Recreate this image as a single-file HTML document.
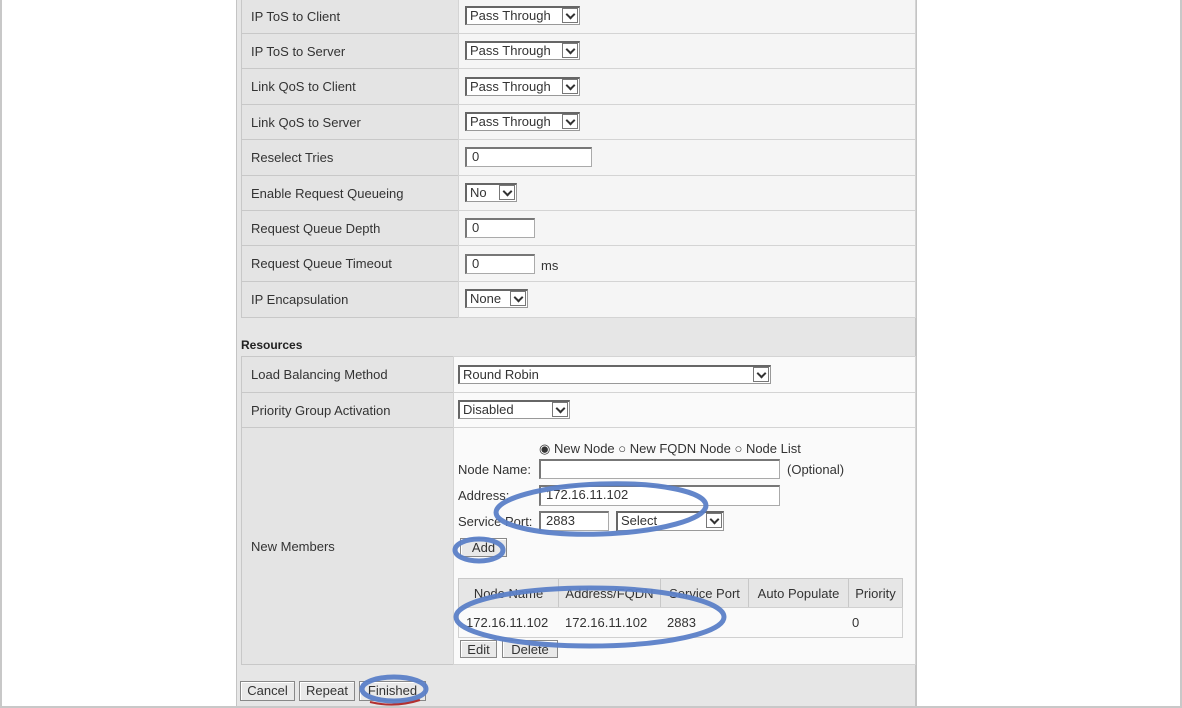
<!DOCTYPE html>
<html><head><meta charset="utf-8"><style>
*{box-sizing:border-box;margin:0;padding:0}
body{width:1182px;height:708px;background:#fff;position:relative;overflow:hidden;font-family:"Liberation Sans",Arial,sans-serif;font-size:13px;color:#333}
.a{position:absolute}
.frame{left:0;top:0;width:1182px;height:708px;border:2px solid #c8c8c8;border-top:none}
.panel{left:236px;top:0;width:681px;height:706px;background:#e6e6e6;border-left:1px solid #c4c4c4;border-right:2px solid #c4c4c4}
.lab{background:#e4e4e4;border:1px solid #c8c8c8;padding-left:9px;display:flex;align-items:center}
.val{background:#f5f5f5;border:1px solid #d4d4d4}
.inp{background:#fff;border:1px solid #aaa;border-top:2px solid #777;border-left:2px solid #777;padding-left:5px;line-height:16px;font-size:13px}
.sel{background:#fff;border:1px solid #999;border-top:2px solid #666;border-left:2px solid #666;padding-left:3px;line-height:16px}
.arr{position:absolute;right:1px;top:0;width:16px;height:15px;border:1px solid #777;background:#fff}
.arr:after{content:"";position:absolute;left:4px;top:2px;width:5px;height:5px;border-right:2px solid #333;border-bottom:2px solid #333;transform:rotate(45deg)}
.btn{background:#e9e9e9;border:1px solid #888;box-shadow:inset 1px 1px #fff;text-align:center;line-height:17px;font-size:13px}
.th{background:#e6e6e6;border:1px solid #c8c8c8;display:flex;align-items:center;justify-content:center}
.td{background:#fafafa;border:1px solid #d0d0d0;display:flex;align-items:center;padding-left:6px}
</style></head><body>
<div class="a frame"></div>
<div class="a panel"></div>

<div class="a lab" style="left:241px;top:-2px;width:218px;height:36px">IP ToS to Client</div>
<div class="a val" style="left:458px;top:-2px;width:458px;height:36px"></div>
<div class="a lab" style="left:241px;top:33px;width:218px;height:36px">IP ToS to Server</div>
<div class="a val" style="left:458px;top:33px;width:458px;height:36px"></div>
<div class="a lab" style="left:241px;top:68px;width:218px;height:37px">Link QoS to Client</div>
<div class="a val" style="left:458px;top:68px;width:458px;height:37px"></div>
<div class="a lab" style="left:241px;top:104px;width:218px;height:36px">Link QoS to Server</div>
<div class="a val" style="left:458px;top:104px;width:458px;height:36px"></div>
<div class="a lab" style="left:241px;top:139px;width:218px;height:37px">Reselect Tries</div>
<div class="a val" style="left:458px;top:139px;width:458px;height:37px"></div>
<div class="a lab" style="left:241px;top:175px;width:218px;height:36px">Enable Request Queueing</div>
<div class="a val" style="left:458px;top:175px;width:458px;height:36px"></div>
<div class="a lab" style="left:241px;top:210px;width:218px;height:36px">Request Queue Depth</div>
<div class="a val" style="left:458px;top:210px;width:458px;height:36px"></div>
<div class="a lab" style="left:241px;top:245px;width:218px;height:37px">Request Queue Timeout</div>
<div class="a val" style="left:458px;top:245px;width:458px;height:37px"></div>
<div class="a lab" style="left:241px;top:281px;width:218px;height:37px">IP Encapsulation</div>
<div class="a val" style="left:458px;top:281px;width:458px;height:37px"></div>

<div class="a sel" style="left:465px;top:6px;width:115px;height:19px">Pass Through<span class="arr"></span></div>
<div class="a sel" style="left:465px;top:41px;width:115px;height:19px">Pass Through<span class="arr"></span></div>
<div class="a sel" style="left:465px;top:77px;width:115px;height:19px">Pass Through<span class="arr"></span></div>
<div class="a sel" style="left:465px;top:112px;width:115px;height:19px">Pass Through<span class="arr"></span></div>
<div class="a inp" style="left:465px;top:147px;width:127px;height:20px">0</div>
<div class="a sel" style="left:465px;top:183px;width:52px;height:19px">No<span class="arr"></span></div>
<div class="a inp" style="left:465px;top:218px;width:70px;height:20px">0</div>
<div class="a inp" style="left:465px;top:254px;width:70px;height:20px">0</div>
<div class="a" style="left:541px;top:258px">ms</div>
<div class="a sel" style="left:465px;top:289px;width:63px;height:19px">None<span class="arr"></span></div>

<div class="a" style="left:241px;top:338px;font-weight:bold;color:#222;font-size:12px">Resources</div>

<div class="a lab" style="left:241px;top:356px;width:213px;height:37px">Load Balancing Method</div>
<div class="a val" style="left:453px;top:356px;width:463px;height:37px;background:#fafafa"></div>
<div class="a lab" style="left:241px;top:392px;width:213px;height:36px">Priority Group Activation</div>
<div class="a val" style="left:453px;top:392px;width:463px;height:36px;background:#fafafa"></div>
<div class="a lab" style="left:241px;top:427px;width:213px;height:238px"><span style="position:absolute;left:9px;top:111px">New Members</span></div>
<div class="a val" style="left:453px;top:427px;width:463px;height:238px;background:#fafafa"></div>

<div class="a sel" style="left:458px;top:365px;width:313px;height:19px">Round Robin<span class="arr"></span></div>
<div class="a sel" style="left:458px;top:400px;width:112px;height:19px">Disabled<span class="arr"></span></div>

<div class="a" style="left:539px;top:441px">&#9673; New Node &#9675; New FQDN Node &#9675; Node List</div>
<div class="a" style="left:458px;top:462px">Node Name:</div>
<div class="a inp" style="left:539px;top:459px;width:241px;height:20px"></div>
<div class="a" style="left:787px;top:462px">(Optional)</div>
<div class="a" style="left:458px;top:488px">Address:</div>
<div class="a inp" style="left:539px;top:485px;width:241px;height:21px">172.16.11.102</div>
<div class="a" style="left:458px;top:514px">Service Port:</div>
<div class="a inp" style="left:539px;top:511px;width:70px;height:20px">2883</div>
<div class="a sel" style="left:616px;top:511px;width:108px;height:20px">Select<span class="arr"></span></div>
<div class="a btn" style="left:460px;top:538px;width:47px;height:19px">Add</div>

<div class="a th" style="left:458px;top:578px;width:101px;height:30px">Node Name</div>
<div class="a th" style="left:558px;top:578px;width:103px;height:30px">Address/FQDN</div>
<div class="a th" style="left:660px;top:578px;width:89px;height:30px">Service Port</div>
<div class="a th" style="left:748px;top:578px;width:101px;height:30px">Auto Populate</div>
<div class="a th" style="left:848px;top:578px;width:55px;height:30px">Priority</div>
<div class="a td" style="left:458px;top:607px;width:445px;height:31px"><span style="position:absolute;left:7px">172.16.11.102</span><span style="position:absolute;left:106px">172.16.11.102</span><span style="position:absolute;left:208px">2883</span><span style="position:absolute;left:393px">0</span></div>
<div class="a btn" style="left:460px;top:640px;width:37px;height:18px">Edit</div>
<div class="a btn" style="left:502px;top:640px;width:56px;height:18px">Delete</div>

<div class="a btn" style="left:240px;top:681px;width:55px;height:20px">Cancel</div>
<div class="a btn" style="left:299px;top:681px;width:56px;height:20px">Repeat</div>
<div class="a btn" style="left:359px;top:681px;width:67px;height:20px">Finished</div>

<svg class="a" style="left:0;top:0" width="1182" height="708">
<g fill="none" stroke="#5b80c8" stroke-width="5" opacity="0.95">
<ellipse cx="601" cy="509" rx="105" ry="25" transform="rotate(-2 601 509)"/>
<ellipse cx="479" cy="550" rx="24" ry="11"/>
<ellipse cx="590" cy="617" rx="134" ry="29"/>
<ellipse cx="394" cy="689" rx="32" ry="12"/>
</g>
<path d="M370 702 Q395 708 420 700" stroke="#b23030" stroke-width="2" fill="none"/>
</svg>
</body></html>
